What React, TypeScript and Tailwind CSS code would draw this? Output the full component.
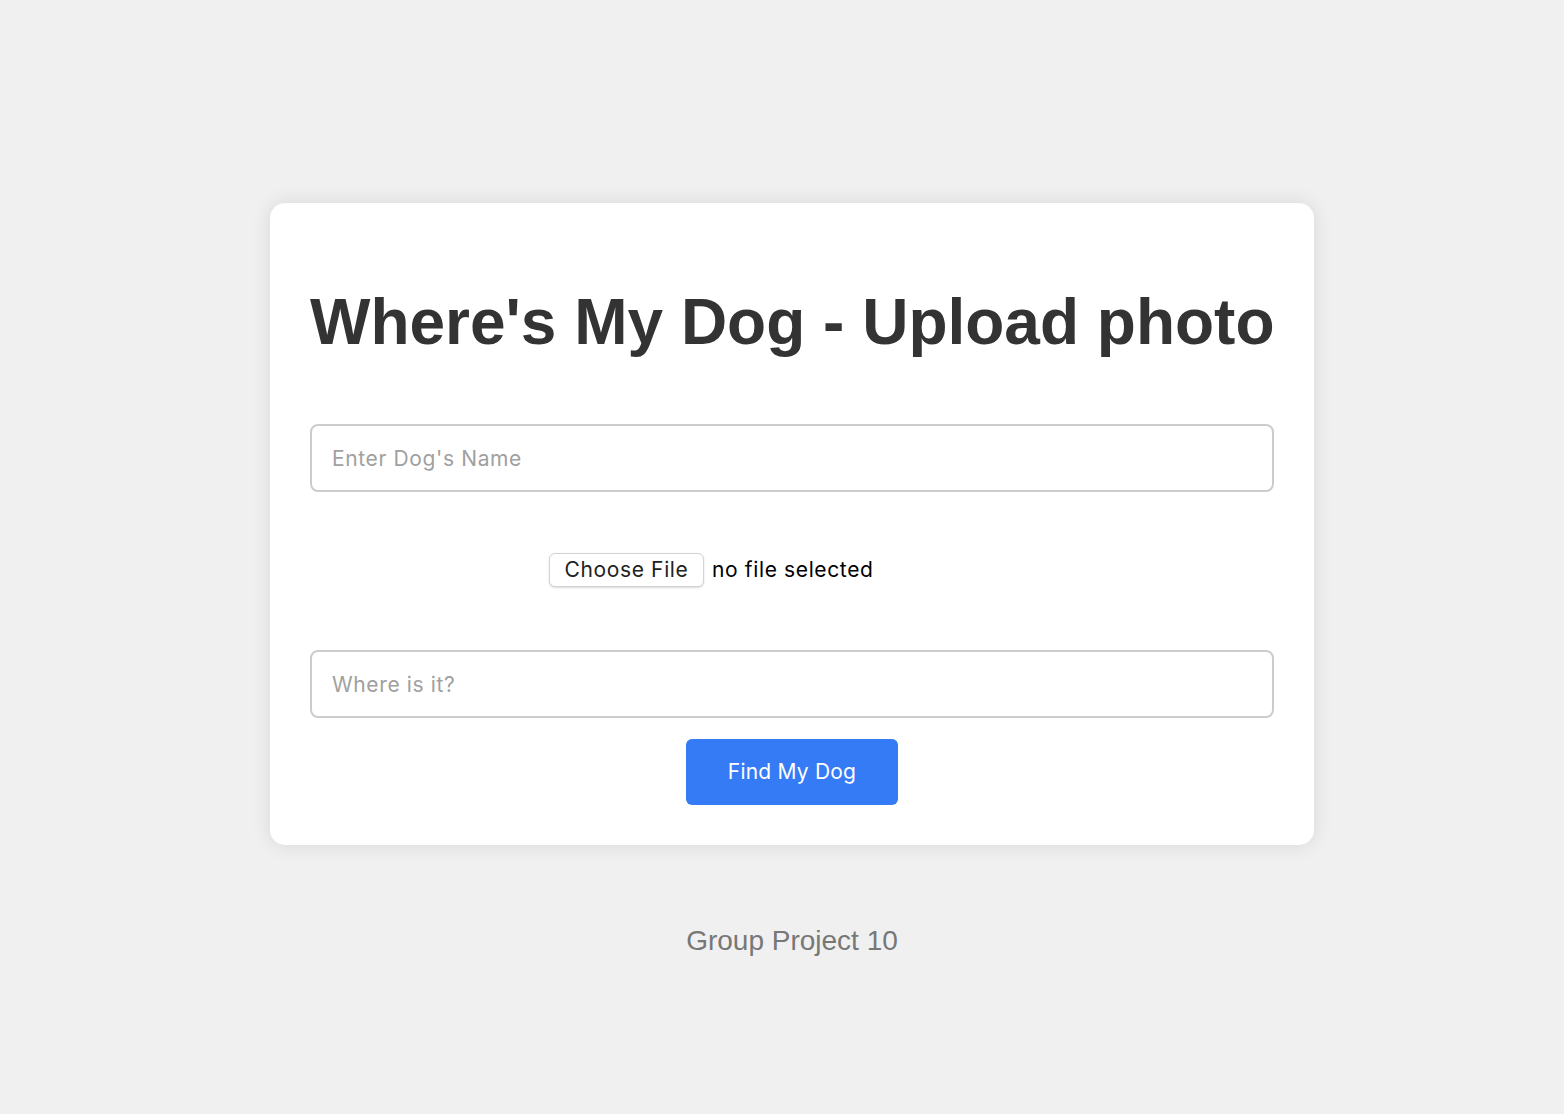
export default function App() {
  return (
    <div className="min-h-screen bg-[#f0f0f0] flex flex-col items-center pt-[203px] pl-5 font-['Liberation_Sans',Arial,sans-serif]">
      {/* Upload card */}
      <div className="w-[1044px] bg-white rounded-[15px] p-10 shadow-[0_0_20px_rgba(0,0,0,0.1)] flex flex-col">
        <h1 className="mt-[42px] mb-[65px] text-[64px] leading-[74px] font-bold text-[#333] text-center whitespace-nowrap">
          Where's My Dog - Upload photo
        </h1>

        <input
          type="text"
          placeholder="Enter Dog's Name"
          className="w-full h-[68px] px-5 border-2 border-[#ccc] rounded-lg text-[21px] tracking-[0.03em] font-['Inter',sans-serif] text-[#333] placeholder:text-[#a0a0a0] outline-none"
        />

        <div className="mt-[61px] h-[34px] flex items-center pl-[239px] font-['Inter',sans-serif]">
          <button className="h-[34px] w-[155px] rounded-md border border-[#d4d4d4] bg-white shadow-[0_1px_2px_rgba(0,0,0,0.15)] text-[21px] tracking-[0.03em] text-[#222]">
            Choose File
          </button>
          <span className="ml-2 text-[21px] tracking-[0.03em] text-black">no file selected</span>
        </div>

        <input
          type="text"
          placeholder="Where is it?"
          className="mt-[63px] w-full h-[68px] px-5 border-2 border-[#ccc] rounded-lg text-[21px] tracking-[0.03em] font-['Inter',sans-serif] text-[#333] placeholder:text-[#a0a0a0] outline-none"
        />

        <div className="mt-[21px] flex justify-center">
          <button className="w-[212px] h-[66px] rounded-md bg-[#367bf6] text-white text-[21px] tracking-[0.01em] font-['Inter',sans-serif]">
            Find My Dog
          </button>
        </div>
      </div>

      <p className="mt-[80px] text-[28px] leading-[32px] text-[#777]">Group Project 10</p>
    </div>
  )
}
